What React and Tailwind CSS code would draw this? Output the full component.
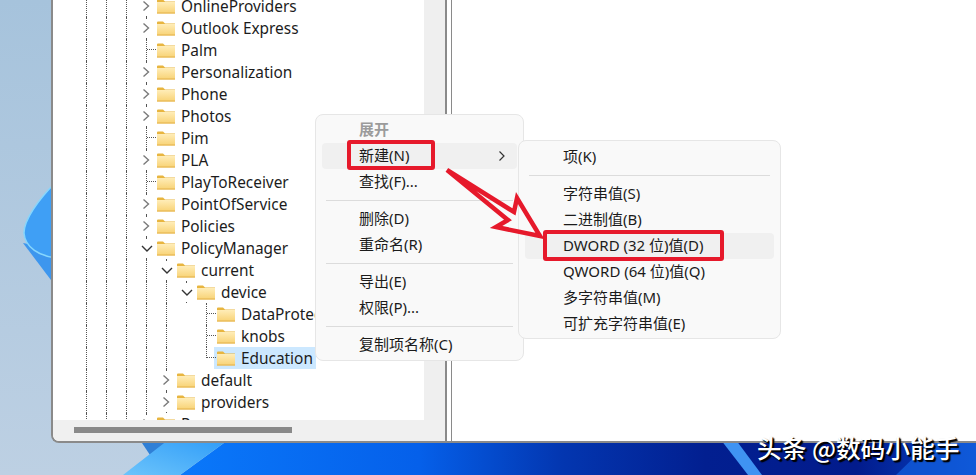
const rows = [
  { name: 'OnlineProviders', cells: ['closed'] },
  { name: 'Outlook Express', cells: ['closed'] },
  { name: 'Palm', cells: ['branch'] },
  { name: 'Personalization', cells: ['closed'] },
  { name: 'Phone', cells: ['closed'] },
  { name: 'Photos', cells: ['closed'] },
  { name: 'Pim', cells: ['branch'] },
  { name: 'PLA', cells: ['closed'] },
  { name: 'PlayToReceiver', cells: ['branch'] },
  { name: 'PointOfService', cells: ['closed'] },
  { name: 'Policies', cells: ['closed'] },
  { name: 'PolicyManager', cells: ['open'] },
  { name: 'current', cells: ['line', 'open'] },
  { name: 'device', cells: ['line', 'line', 'open'] },
  { name: 'DataProtection', cells: ['line', 'line', 'none', 'branch'] },
  { name: 'knobs', cells: ['line', 'line', 'none', 'branch'] },
  { name: 'Education', cells: ['line', 'line', 'none', 'last'], selected: true },
  { name: 'default', cells: ['line', 'closed'] },
  { name: 'providers', cells: ['line', 'closed'] },
  { name: 'Power', cells: ['closed'] },
];

function Folder() {
  return (
    <svg width="18" height="15" viewBox="0 0 18 15" className="shrink-0">
      <defs>
        <linearGradient id="folderBody" x1="0" y1="0" x2="0" y2="1">
          <stop offset="0" stopColor="#ffedb8" />
          <stop offset="1" stopColor="#f8d274" />
        </linearGradient>
      </defs>
      <path d="M0 1.5 Q0 .5 1 .5 H6 L8 2.5 H18 V14 H0 Z" fill="#e8b53f" />
      <rect x="0" y="3" width="18" height="11.5" fill="url(#folderBody)" />
      <rect x="0" y="13.5" width="18" height="1" fill="#e3b24c" />
    </svg>
  );
}

function Cell({ type }) {
  const dotted = 'border-dotted border-[#555]';
  const hasChevron = type === 'closed' || type === 'open';
  return (
    <div className="w-5 h-full flex pl-[10px] relative shrink-0">
      {(type === 'line' || hasChevron) && <div className={`h-full border-l ${dotted}`} />}
      {type === 'branch' && (
        <div className={`w-[10px] h-full border-l ${dotted}`}>
          <div className={`h-[11px] border-b ${dotted}`} />
        </div>
      )}
      {type === 'last' && <div className={`w-[10px] h-[11px] border-l border-b ${dotted}`} />}
      {type === 'closed' && (
        <svg width="12" height="18" viewBox="0 0 12 18" className="absolute left-[4px] top-[2px] bg-white">
          <path d="M3.5 4.5 L8.5 9 L3.5 13.5" fill="none" stroke="#7a7a7a" strokeWidth="1.4" />
        </svg>
      )}
      {type === 'open' && (
        <svg width="12" height="18" viewBox="0 0 12 18" className="absolute left-[5px] top-[2px] bg-white">
          <path d="M1 7 L6 12 L11 7" fill="none" stroke="#333" strokeWidth="1.4" />
        </svg>
      )}
    </div>
  );
}

function TreeRow({ row }) {
  return (
    <div className="h-[22px] flex shrink-0">
      <Cell type="line" />
      <Cell type="line" />
      <Cell type="line" />
      {row.cells.map((c, i) => <Cell key={i} type={c} />)}
      <div className={`h-[22px] flex items-center px-[3px] -ml-[2px] ${row.selected ? 'bg-[#cce8ff]' : ''}`}>
        <Folder />
        <span className="ml-[6px] pt-[2px] text-[15.4px] leading-[22px] text-[#1c1c1c] whitespace-nowrap">{row.name}</span>
      </div>
    </div>
  );
}

function MenuItem({ label, muted, hover, chevron }) {
  return (
    <div className={`h-[26px] mx-[6px] rounded flex items-center justify-between ${hover ? 'bg-[#f0f0f0]' : ''}`}>
      <span className={`pb-[2px] text-[15px] whitespace-nowrap ${muted ? 'font-bold text-[#9b9b9b]' : 'text-[#1b1b1b]'}`}>{label}</span>
      {chevron && (
        <svg width="8" height="12" viewBox="0 0 8 12" className="mr-[11px]">
          <path d="M1.5 1.5 L6 6 L1.5 10.5" fill="none" stroke="#333" strokeWidth="1.2" />
        </svg>
      )}
    </div>
  );
}

function Sep() {
  return <div className="h-[11px] flex items-center px-[10px]"><div className="w-full h-px bg-[#dcdcdc]" /></div>;
}

export default function App() {
  return (
    <div className="relative w-[976px] h-[475px] overflow-hidden font-['Noto_Sans','Noto_Sans_CJK_SC',sans-serif]">
      {/* wallpaper */}
      <svg width="976" height="475" viewBox="0 0 976 475" className="absolute inset-0">
        <defs>
          <linearGradient id="wall" x1="0" y1="0" x2="0" y2="1">
            <stop offset="0" stopColor="#a6c3dc" />
            <stop offset="1" stopColor="#bdd0e3" />
          </linearGradient>
          <linearGradient id="deep" x1="0" y1="0" x2="1" y2="0">
            <stop offset="0" stopColor="#0a78fa" />
            <stop offset="0.3" stopColor="#0560ea" />
            <stop offset="0.48" stopColor="#0336b0" />
            <stop offset="0.66" stopColor="#021f90" />
            <stop offset="0.85" stopColor="#021b8c" />
            <stop offset="1" stopColor="#0746c8" />
          </linearGradient>
          <linearGradient id="band" x1="0" y1="1" x2="1" y2="0">
            <stop offset="0" stopColor="#6cc4fb" />
            <stop offset="1" stopColor="#2f9cf8" />
          </linearGradient>
        </defs>
        <rect width="976" height="475" fill="url(#wall)" />
        <path d="M23 243 L60 292 V250 Z" fill="#3d96ee" />
        <path d="M56 182 C38 200 24 220 24 233 C25 248 40 256 56 258 Z" fill="#3f9ff5" stroke="#86d6fd" strokeWidth="1.5" />
        <path d="M180 475 L228 440 H976 V475 Z" fill="url(#deep)" />
        <path d="M140 440 L150 455 L172 440 Z" fill="#2f7fd6" />
        <path d="M123 475 L168 440 H228 L180 475 Z" fill="url(#band)" />
        <path d="M721 440 H736 L762 475 H748 Z" fill="#3f93f2" />
        <path d="M896 475 L932 440 H976 V475 Z" fill="#1261e0" opacity="0.7" />
      </svg>

      {/* regedit window */}
      <div className="relative ml-[51px] h-[443px] flex bg-white border-l-2 border-b-2 border-[#8a8a8a] rounded-bl-lg overflow-hidden">
        <div className="w-[392px] flex flex-col shrink-0">
          <div className="flex-1 flex min-h-0">
            <div className="w-[371px] overflow-hidden pl-[23px] -mt-[5px]">
              {rows.map(row => <TreeRow key={row.name} row={row} />)}
            </div>
            <div className="w-[21px] bg-[#efefef]" />
          </div>
          <div className="h-[21px] bg-[#f0f0f0] shrink-0 pl-[21px] pt-[7px]">
            <div className="w-[218px] h-[6px] bg-[#8a8a8a]" />
          </div>
        </div>
        <div className="w-[2px] bg-[#8a8a8a] shrink-0" />
        <div className="w-[4px] shrink-0" />
        <div className="w-px bg-[#8a8a8a] shrink-0" />
        <div className="flex-1" />
      </div>

      {/* context menu */}
      <div className="absolute left-[315px] top-[114px] w-[209px] h-[247px] bg-[#f9f9f9] border border-[#e6e6e6] rounded-lg pt-[2px] [&_span]:ml-[37px]">
        <MenuItem label="展开" muted />
        <MenuItem label="新建(N)" hover chevron />
        <MenuItem label="查找(F)..." />
        <Sep />
        <MenuItem label="删除(D)" />
        <MenuItem label="重命名(R)" />
        <Sep />
        <MenuItem label="导出(E)" />
        <MenuItem label="权限(P)..." />
        <Sep />
        <MenuItem label="复制项名称(C)" />
      </div>

      {/* submenu */}
      <div className="absolute left-[518px] top-[140px] w-[263px] h-[199px] bg-[#f9f9f9] border border-[#e6e6e6] rounded-lg pt-[3px] [&_span]:ml-[38px]">
        <MenuItem label="项(K)" />
        <Sep />
        <MenuItem label="字符串值(S)" />
        <MenuItem label="二进制值(B)" />
        <MenuItem label="DWORD (32 位)值(D)" hover />
        <MenuItem label="QWORD (64 位)值(Q)" />
        <MenuItem label="多字符串值(M)" />
        <MenuItem label="可扩充字符串值(E)" />
      </div>

      {/* annotations */}
      <div className="absolute left-[347px] top-[140px] w-[88px] h-[30px] border-4 border-[#e6192b] rounded-[3px]" />
      <div className="absolute left-[543px] top-[230px] w-[181px] h-[31px] border-4 border-[#e6192b] rounded-[3px]" />
      <svg width="976" height="475" viewBox="0 0 976 475" className="absolute inset-0 pointer-events-none">
        <path d="M447 170 L514 212 L517 198 L540 236 L496 227 L508 220 Z" fill="none" stroke="#e6192b" strokeWidth="4.5" strokeLinejoin="miter" />
      </svg>

      {/* watermark */}
      <div className="absolute left-[757px] top-[430px] text-[24.7px] leading-[34px] font-medium text-white whitespace-nowrap [text-shadow:1px_1px_1px_#000,2px_2px_1px_#000] font-['Noto_Sans_CJK_SC',sans-serif]">
        头条 @数码小能手
      </div>
    </div>
  );
}
